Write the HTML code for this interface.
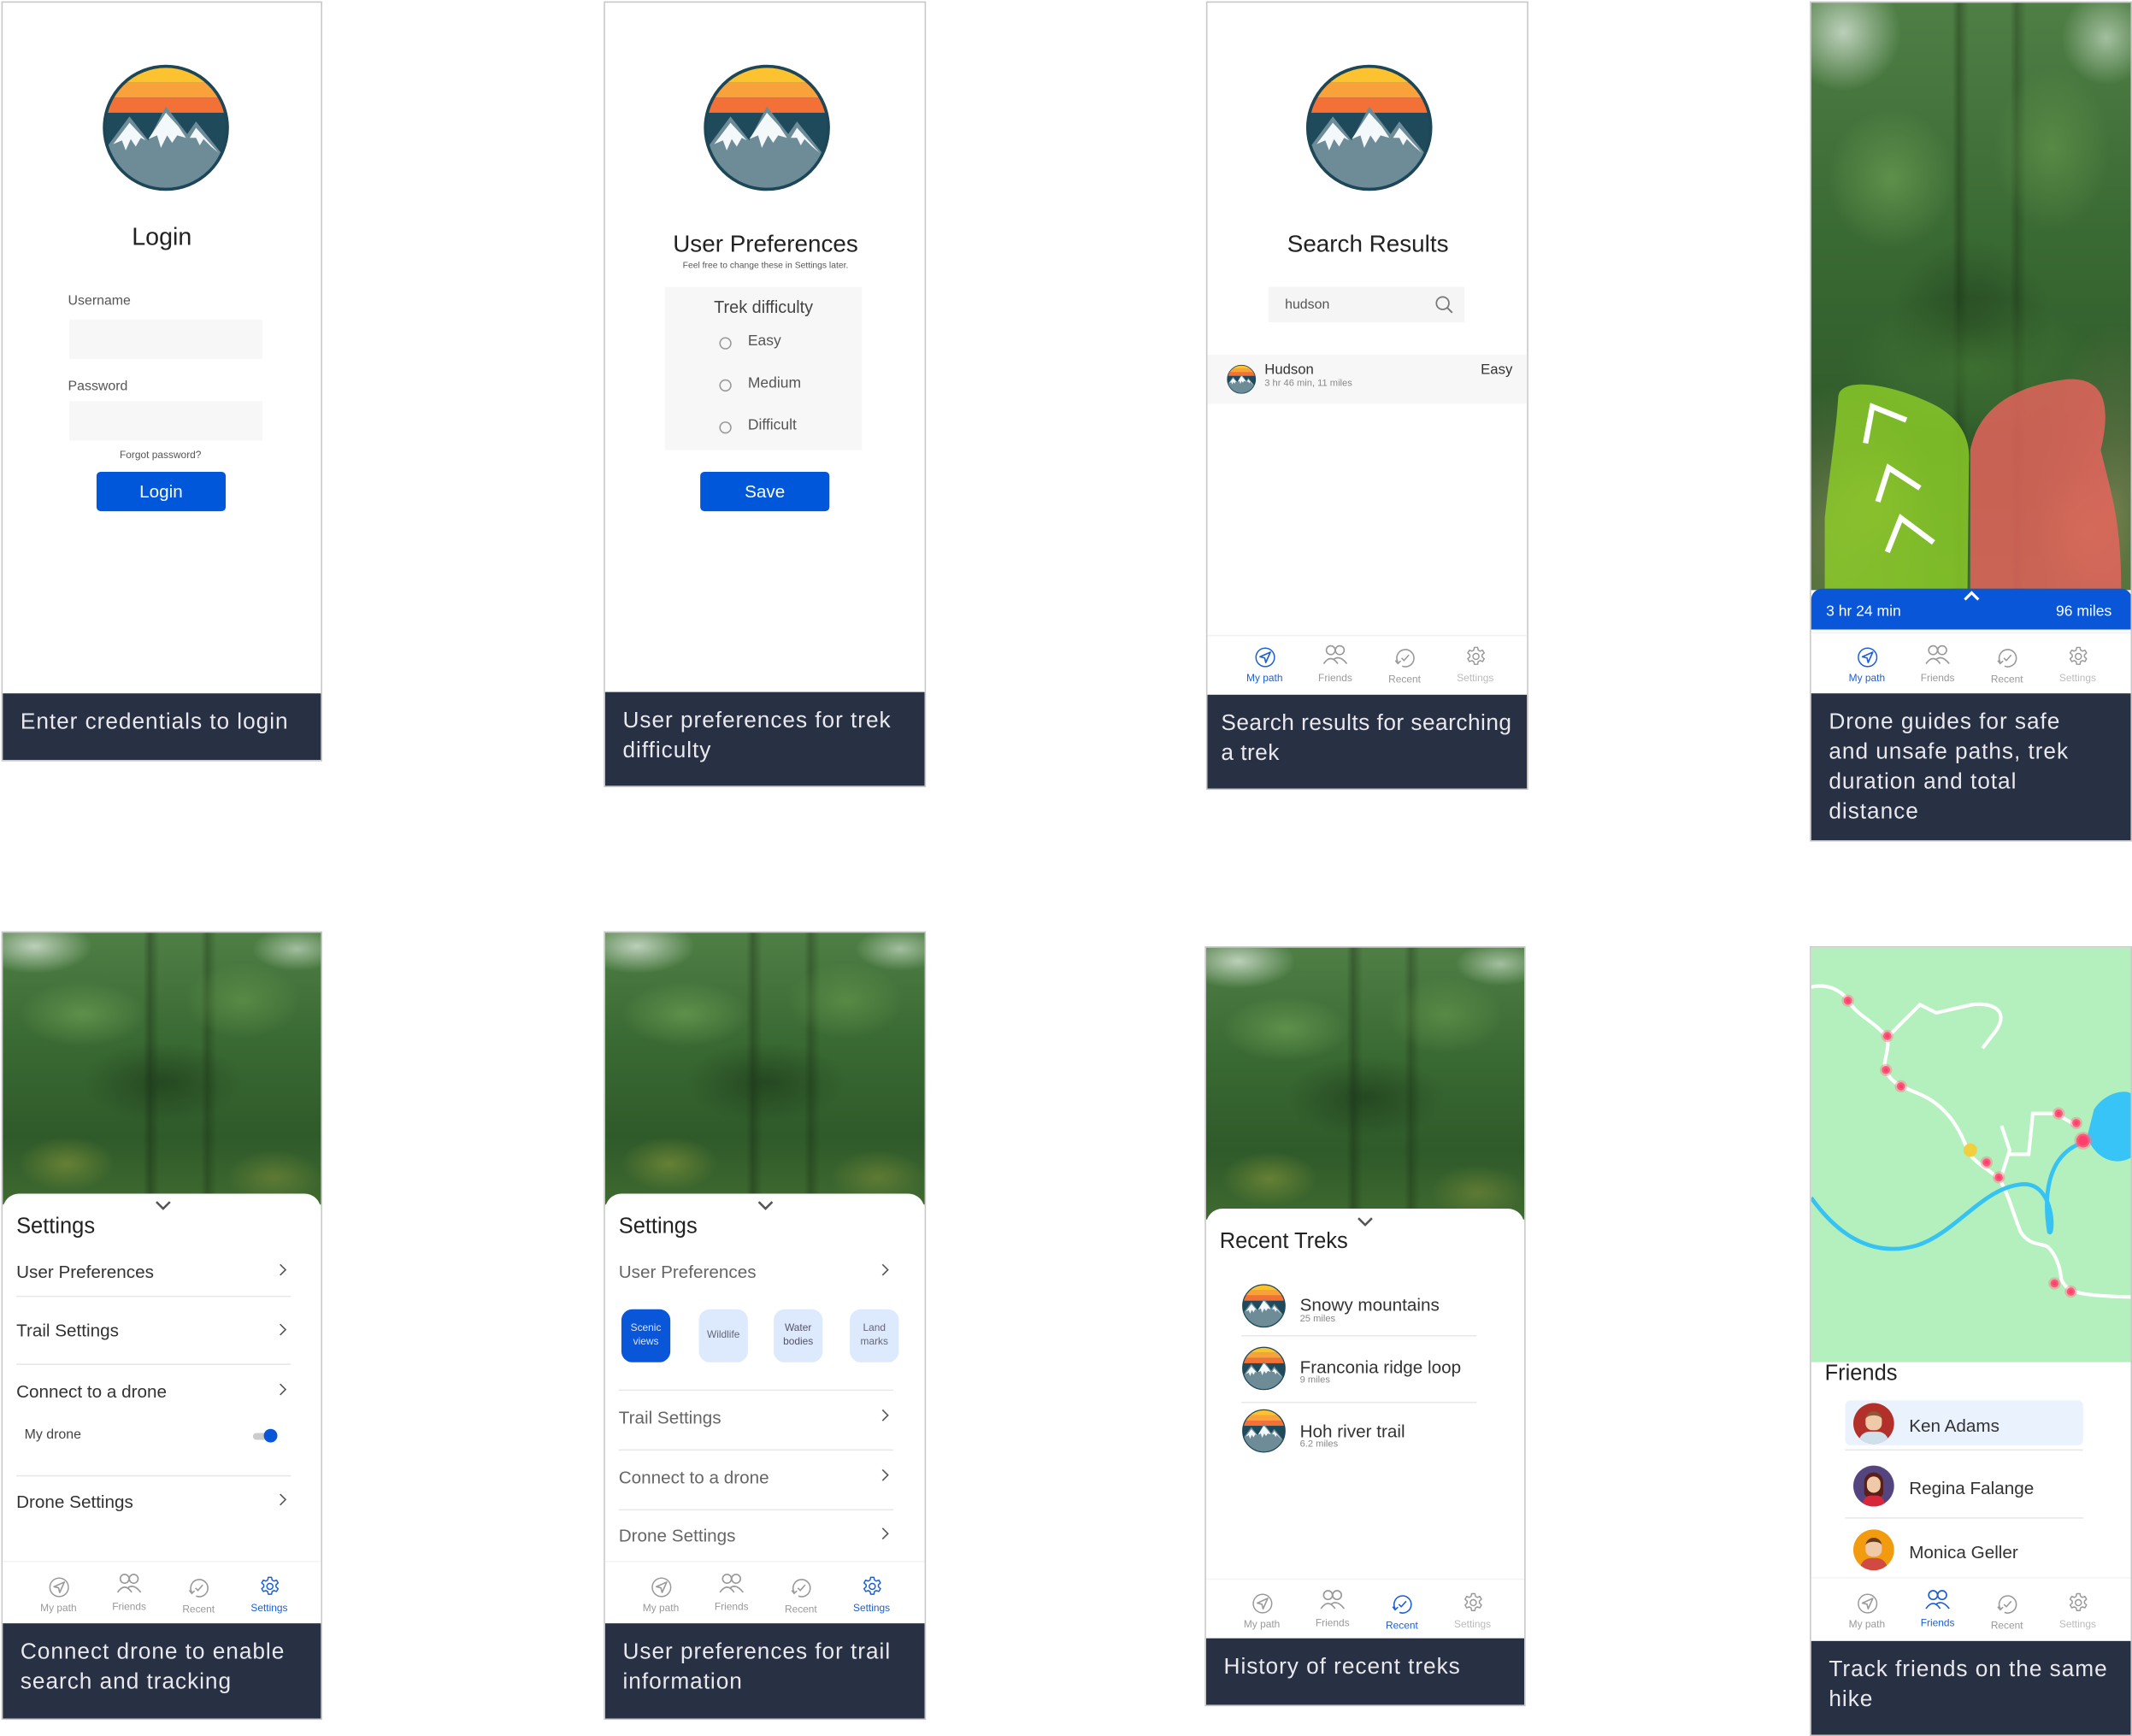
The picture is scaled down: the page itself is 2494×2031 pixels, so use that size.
<!DOCTYPE html>
<html><head><meta charset="utf-8"><style>
*{margin:0;padding:0;box-sizing:border-box}
html,body{width:2494px;height:2031px;overflow:hidden;background:#fff}
#w{position:absolute;left:0;top:0;width:1568px;height:1277px;transform:scale(1.5906);transform-origin:0 0;font-family:"Liberation Sans",sans-serif;color:#333}
.a{position:absolute}
.p{position:absolute;border:1px solid #c8c8c8;background:#fff;overflow:hidden}
.cap{position:absolute;left:0;right:0;bottom:0;background:#283044;color:#e9e9ee;font-size:16.5px;letter-spacing:.6px;line-height:22px;padding:10px 4px 10px 13px;white-space:nowrap}
.t{position:absolute;white-space:nowrap}
.forest{position:absolute;background:
radial-gradient(ellipse 18% 10% at 10% 5%,rgba(225,235,225,.75),transparent),
radial-gradient(ellipse 14% 8% at 92% 6%,rgba(220,235,220,.6),transparent),
radial-gradient(ellipse 20% 12% at 25% 30%,rgba(120,170,90,.55),transparent),
radial-gradient(ellipse 18% 14% at 75% 25%,rgba(110,160,80,.5),transparent),
radial-gradient(ellipse 25% 15% at 50% 55%,rgba(20,45,20,.5),transparent),
radial-gradient(ellipse 15% 10% at 20% 85%,rgba(150,160,60,.5),transparent),
radial-gradient(ellipse 15% 10% at 85% 90%,rgba(140,150,60,.45),transparent),
linear-gradient(90deg,transparent 44%,rgba(20,35,15,.35) 46%,transparent 49%,transparent 62%,rgba(20,35,15,.3) 64%,transparent 67%),
linear-gradient(#4f7f45,#3a6a33 40%,#2f5a2a 75%,#3f6a30)}
.nav{position:absolute;left:0;right:0;height:44px;background:#fff;border-top:1px solid #f0f2f5}
.ni{position:absolute;width:50px;margin-left:-25px;text-align:center;font-size:7.5px;color:#999}
.ni svg{display:block;margin:0 auto 2px}
.on{color:#1a5fd6}
.sheet{position:absolute;left:0;right:0;background:#fff;border-radius:12px 12px 0 0}
.row{position:absolute;font-size:13px;color:#333}
.div{position:absolute;height:1px;background:#e8e8e8}
</style></head><body><div id="w">
<svg width="0" height="0" style="position:absolute">
<defs>
<clipPath id="lc"><circle cx="0" cy="0" r="49"/></clipPath>
<symbol id="logo" viewBox="-52 -52 104 104">
<g clip-path="url(#lc)">
<rect x="-52" y="-52" width="104" height="104" fill="#1e4a5b"/>
<rect x="-52" y="-52" width="104" height="16" fill="#fcc22f"/>
<rect x="-52" y="-36" width="104" height="12" fill="#f9a23b"/>
<rect x="-52" y="-24" width="104" height="12" fill="#f37036"/>
<path d="M-52,22 L-29,-9 L-14,10 L0,-17 L17,5 L24,-5 L52,30 L52,52 L-52,52Z" fill="#6d8c98"/>
<path d="M-29,-4 L-42,13 L-35,10 L-32,18 L-28,9 L-24,15 L-20,8 L-16,10Z" fill="#f3f8fb"/>
<path d="M0,-12 L-14,9 L-7,6 L-4,16 L1,6 L5,12 L9,6 L16,8 L10,-1Z" fill="#f3f8fb"/>
<path d="M24,0 L19,8 L24,8 L27,14 L30,9 L36,15 L42,20Z" fill="#f3f8fb"/>
</g>
<circle cx="0" cy="0" r="49" fill="none" stroke="#1d4656" stroke-width="2.5"/>
</symbol>
<symbol id="i-path" viewBox="0 0 20 20"><circle cx="10" cy="10" r="8" fill="none" stroke="currentColor" stroke-width="1.1"/><path d="M14.5,5.5 L5.5,9.5 L9.5,10.5 L10.5,14.5Z" fill="none" stroke="currentColor" stroke-width="1.2" stroke-linejoin="round"/></symbol>
<symbol id="i-fr" viewBox="0 0 20 20"><circle cx="6.5" cy="5.5" r="3.4" fill="none" stroke="currentColor" stroke-width="1.1"/><circle cx="13.5" cy="5.5" r="3.4" fill="none" stroke="currentColor" stroke-width="1.1"/><path d="M1,16 Q6.5,8 12,16 M9,12.5 Q13.5,9 19,16" fill="none" stroke="currentColor" stroke-width="1.1"/></symbol>
<symbol id="i-rec" viewBox="0 0 20 20"><path d="M4.5,13.5 A7,7 0 1 1 8,16.6" fill="none" stroke="currentColor" stroke-width="1.1"/><path d="M2.5,12 L4.5,14.5 L6.8,12.3" fill="none" stroke="currentColor" stroke-width="1.1"/><path d="M7.5,10 L9.5,12 L13.5,7.5" fill="none" stroke="currentColor" stroke-width="1.1"/></symbol>
<symbol id="i-set" viewBox="0 0 20 20"><path d="M8.6,2 h2.8 l.5,2.3 l1.6,.9 l2.2,-.8 l1.4,2.4 l-1.8,1.6 v1.8 l1.8,1.6 l-1.4,2.4 l-2.2,-.8 l-1.6,.9 l-.5,2.3 h-2.8 l-.5,-2.3 l-1.6,-.9 l-2.2,.8 l-1.4,-2.4 l1.8,-1.6 v-1.8 l-1.8,-1.6 l1.4,-2.4 l2.2,.8 l1.6,-.9Z" fill="none" stroke="currentColor" stroke-width="1.1" stroke-linejoin="round"/><circle cx="10" cy="9.8" r="2.6" fill="none" stroke="currentColor" stroke-width="1.1"/></symbol>
<symbol id="chev" viewBox="0 0 10 10"><path d="M3,1 L7,5 L3,9" fill="none" stroke="#555" stroke-width="1"/></symbol>
</defs></svg>

<!-- P1 Login -->
<div class="p" style="left:1px;top:1px;width:236px;height:559px">
<svg class="a" style="left:72px;top:44px" width="96" height="96"><use href="#logo"/></svg>
<div class="t" style="left:0;width:234px;text-align:center;top:162px;font-size:18px;color:#222">Login</div>
<div class="t" style="left:48px;top:214px;font-size:10px;color:#555">Username</div>
<div class="a" style="left:49px;top:233px;width:142px;height:29px;background:#f7f7f7"></div>
<div class="t" style="left:48px;top:277px;font-size:10px;color:#555">Password</div>
<div class="a" style="left:49px;top:293px;width:142px;height:29px;background:#f7f7f7"></div>
<div class="t" style="left:0;width:232px;text-align:center;top:328px;font-size:7.5px;color:#555">Forgot password?</div>
<div class="a" style="left:69px;top:345px;width:95px;height:29px;background:#0057d9;border-radius:3px;color:#fff;font-size:13px;text-align:center;line-height:29px">Login</div>
<div class="cap" style="height:49px">Enter credentials to login</div>
</div>

<!-- P2 Preferences -->
<div class="p" style="left:444px;top:1px;width:237px;height:578px">
<svg class="a" style="left:71px;top:44px" width="96" height="96"><use href="#logo"/></svg>
<div class="t" style="left:0;width:236px;text-align:center;top:167px;font-size:17.5px;color:#222">User Preferences</div>
<div class="t" style="left:0;width:236px;text-align:center;top:190px;font-size:6.5px;color:#555">Feel free to change these in Settings later.</div>
<div class="a" style="left:44px;top:209px;width:145px;height:120px;background:#f7f7f7"></div>
<div class="t" style="left:44px;width:145px;text-align:center;top:217px;font-size:12.5px;color:#444">Trek difficulty</div>
<div class="a" style="left:84px;top:246px;width:9px;height:9px;border:1px solid #999;border-radius:50%"></div>
<div class="t" style="left:105px;top:243px;font-size:11px;color:#555">Easy</div>
<div class="a" style="left:84px;top:277px;width:9px;height:9px;border:1px solid #999;border-radius:50%"></div>
<div class="t" style="left:105px;top:274px;font-size:11px;color:#555">Medium</div>
<div class="a" style="left:84px;top:308px;width:9px;height:9px;border:1px solid #999;border-radius:50%"></div>
<div class="t" style="left:105px;top:305px;font-size:11px;color:#555">Difficult</div>
<div class="a" style="left:70px;top:345px;width:95px;height:29px;background:#0057d9;border-radius:3px;color:#fff;font-size:13px;text-align:center;line-height:29px">Save</div>
<div class="cap" style="height:69px">User preferences for trek<br>difficulty</div>
</div>

<!-- P3 Search -->
<div class="p" style="left:887px;top:1px;width:237px;height:580px">
<svg class="a" style="left:71px;top:44px" width="96" height="96"><use href="#logo"/></svg>
<div class="t" style="left:0;width:236px;text-align:center;top:167px;font-size:17.5px;color:#222">Search Results</div>
<div class="a" style="left:45px;top:209px;width:144px;height:26px;background:#f5f5f5"></div>
<div class="t" style="left:57px;top:217px;font-size:10px;color:#555">hudson</div>
<svg class="a" style="left:167px;top:215px" width="14" height="14" viewBox="0 0 14 14"><circle cx="6" cy="6" r="4.6" fill="none" stroke="#777" stroke-width="1.1"/><path d="M9.4,9.4 L13,13" stroke="#777" stroke-width="1.2"/></svg>
<div class="a" style="left:0;top:259px;width:236px;height:36px;background:#f7f7f7"></div>
<svg class="a" style="left:14px;top:266px" width="22" height="22"><use href="#logo"/></svg>
<div class="t" style="left:42px;top:264px;font-size:10.5px;color:#333">Hudson</div>
<div class="t" style="left:42px;top:277px;font-size:7px;color:#888">3 hr 46 min, 11 miles</div>
<div class="t" style="left:201px;top:264px;font-size:10.5px;color:#333">Easy</div>
<div class="nav" style="top:465px">
<div class="ni on" style="left:42px;top:7px"><svg width="17" height="17"><use href="#i-path"/></svg>My path</div>
<div class="ni" style="left:94px;top:5px"><svg width="20" height="19"><use href="#i-fr"/></svg>Friends</div>
<div class="ni" style="left:145px;top:7px"><svg width="18" height="18"><use href="#i-rec"/></svg>Recent</div>
<div class="ni" style="left:197px;top:6px;color:#bbb"><svg width="17" height="18" style="color:#999"><use href="#i-set"/></svg>Settings</div>
</div>
<div class="cap" style="height:69px;letter-spacing:.3px;padding-left:10px">Search results for searching<br>a trek</div>
</div>

<!-- P4 Drone -->
<div class="p" style="left:1331px;top:1px;width:237px;height:618px">
<div class="forest" style="left:0;top:0;width:236px;height:432px"></div>
<div class="a" style="left:0;top:0;width:236px;height:432px;background:radial-gradient(ellipse 30% 25% at 10% 90%,rgba(170,150,110,.45),transparent),radial-gradient(ellipse 25% 30% at 95% 85%,rgba(170,150,110,.45),transparent),radial-gradient(ellipse 40% 12% at 50% 62%,rgba(80,140,60,.5),transparent)"></div>
<svg class="a" style="left:0;top:0" width="236" height="460" viewBox="1332 1 236 460">
<path d="M1352,290 C1355,275 1395,282 1425,298 C1445,310 1449,325 1448,340 L1447,432 L1342,432 L1342,380 C1345,350 1350,320 1352,290Z" fill="rgba(140,205,40,.82)"/>
<path d="M1449,330 C1455,300 1480,283 1520,278 C1550,276 1552,300 1545,330 C1552,360 1560,380 1560,432 L1449,432Z" fill="rgba(238,100,95,.8)"/>
<path d="M1372,325 L1377,298 L1402,308 M1381,368 L1389,343 L1412,358 M1388,405 L1398,380 L1422,398" fill="none" stroke="#fff" stroke-width="4"/>
</svg>
<div class="a" style="left:0;top:431px;width:236px;height:30px;background:#0a56d8;border-radius:8px 8px 0 0"></div>
<svg class="a" style="left:111px;top:432px" width="14" height="9" viewBox="0 0 14 9"><path d="M2,7 L7,2 L12,7" fill="none" stroke="#fff" stroke-width="2"/></svg>
<div class="t" style="left:11px;top:442px;font-size:11px;color:#fff">3 hr 24 min</div>
<div class="t" style="right:14px;top:442px;font-size:11px;color:#fff">96 miles</div>
<div class="nav" style="top:463px">
<div class="ni on" style="left:41px;top:9px"><svg width="17" height="17"><use href="#i-path"/></svg>My path</div>
<div class="ni" style="left:93px;top:7px"><svg width="20" height="19"><use href="#i-fr"/></svg>Friends</div>
<div class="ni" style="left:144px;top:9px"><svg width="18" height="18"><use href="#i-rec"/></svg>Recent</div>
<div class="ni" style="left:196px;top:8px;color:#bbb"><svg width="17" height="18" style="color:#999"><use href="#i-set"/></svg>Settings</div>
</div>
<div class="cap" style="height:108px">Drone guides for safe<br>and unsafe paths, trek<br>duration and total<br>distance</div>
</div>

<!-- P5 Settings drone -->
<div class="p" style="left:1px;top:685px;width:236px;height:580px">
<div class="forest" style="left:0;top:0;width:235px;height:200px"></div>
<div class="sheet" style="top:192px;height:390px"></div>
<svg class="a" style="left:111px;top:196px" width="14" height="9" viewBox="0 0 14 9"><path d="M2,2 L7,7 L12,2" fill="none" stroke="#555" stroke-width="1.6"/></svg>
<div class="t" style="left:10px;top:208px;font-size:16px;color:#222">Settings</div>
<div class="row" style="left:10px;top:242px">User Preferences</div>
<svg class="a" style="left:201px;top:243px" width="10" height="10"><use href="#chev"/></svg>
<div class="div" style="left:10px;width:202px;top:267px"></div>
<div class="row" style="left:10px;top:285px">Trail Settings</div>
<svg class="a" style="left:201px;top:287px" width="10" height="10"><use href="#chev"/></svg>
<div class="div" style="left:10px;width:202px;top:317px"></div>
<div class="row" style="left:10px;top:330px">Connect to a drone</div>
<svg class="a" style="left:201px;top:331px" width="10" height="10"><use href="#chev"/></svg>
<div class="t" style="left:16px;top:364px;font-size:10px;color:#444">My drone</div>
<div class="a" style="left:184px;top:368px;width:15px;height:5px;background:#ccc;border-radius:3px"></div>
<div class="a" style="left:192px;top:365px;width:10px;height:10px;background:#0a56d8;border-radius:50%"></div>
<div class="div" style="left:10px;width:202px;top:399px"></div>
<div class="row" style="left:10px;top:411px">Drone Settings</div>
<svg class="a" style="left:201px;top:412px" width="10" height="10"><use href="#chev"/></svg>
<div class="nav" style="top:462px;border-top:1px solid #f3f4f7">
<div class="ni" style="left:41px;top:10px"><svg width="17" height="17"><use href="#i-path"/></svg>My path</div>
<div class="ni" style="left:93px;top:7px"><svg width="20" height="19"><use href="#i-fr"/></svg>Friends</div>
<div class="ni" style="left:144px;top:10px"><svg width="18" height="18"><use href="#i-rec"/></svg>Recent</div>
<div class="ni on" style="left:196px;top:9px"><svg width="17" height="18"><use href="#i-set"/></svg>Settings</div>
</div>
<div class="cap" style="height:70px">Connect drone to enable<br>search and tracking</div>
</div>

<!-- P6 Settings trail -->
<div class="p" style="left:444px;top:685px;width:237px;height:580px">
<div class="forest" style="left:0;top:0;width:236px;height:200px"></div>
<div class="sheet" style="top:192px;height:390px"></div>
<svg class="a" style="left:111px;top:196px" width="14" height="9" viewBox="0 0 14 9"><path d="M2,2 L7,7 L12,2" fill="none" stroke="#555" stroke-width="1.6"/></svg>
<div class="t" style="left:10px;top:208px;font-size:16px;color:#222">Settings</div>
<div class="row" style="left:10px;top:242px;color:#666">User Preferences</div>
<svg class="a" style="left:201px;top:243px" width="10" height="10"><use href="#chev"/></svg>
<div class="a" style="left:12px;top:277px;width:36px;height:39px;background:#0a56d8;border-radius:8px;color:#dbe6fb;font-size:7.5px;text-align:center;padding-top:9px;line-height:10px">Scenic<br>views</div>
<div class="a" style="left:69px;top:277px;width:36px;height:39px;background:#dde9fd;border-radius:8px;color:#667;font-size:7.5px;text-align:center;padding-top:14px;line-height:10px">Wildlife</div>
<div class="a" style="left:124px;top:277px;width:36px;height:39px;background:#dde9fd;border-radius:8px;color:#556;font-size:7.5px;text-align:center;padding-top:9px;line-height:10px">Water<br>bodies</div>
<div class="a" style="left:180px;top:277px;width:36px;height:39px;background:#dde9fd;border-radius:8px;color:#667;font-size:7.5px;text-align:center;padding-top:9px;line-height:10px">Land<br>marks</div>
<div class="div" style="left:10px;width:202px;top:336px"></div>
<div class="row" style="left:10px;top:349px;color:#666">Trail Settings</div>
<svg class="a" style="left:201px;top:350px" width="10" height="10"><use href="#chev"/></svg>
<div class="div" style="left:10px;width:202px;top:380px"></div>
<div class="row" style="left:10px;top:393px;color:#666">Connect to a drone</div>
<svg class="a" style="left:201px;top:394px" width="10" height="10"><use href="#chev"/></svg>
<div class="div" style="left:10px;width:202px;top:424px"></div>
<div class="row" style="left:10px;top:436px;color:#666">Drone Settings</div>
<svg class="a" style="left:201px;top:437px" width="10" height="10"><use href="#chev"/></svg>
<div class="nav" style="top:462px;border-top:1px solid #f3f4f7">
<div class="ni" style="left:41px;top:10px"><svg width="17" height="17"><use href="#i-path"/></svg>My path</div>
<div class="ni" style="left:93px;top:7px"><svg width="20" height="19"><use href="#i-fr"/></svg>Friends</div>
<div class="ni" style="left:144px;top:10px"><svg width="18" height="18"><use href="#i-rec"/></svg>Recent</div>
<div class="ni on" style="left:196px;top:9px"><svg width="17" height="18"><use href="#i-set"/></svg>Settings</div>
</div>
<div class="cap" style="height:70px">User preferences for trail<br>information</div>
</div>

<!-- P7 Recent -->
<div class="p" style="left:886px;top:696px;width:236px;height:559px">
<div class="forest" style="left:0;top:0;width:235px;height:200px"></div>
<div class="sheet" style="top:192px;height:370px"></div>
<svg class="a" style="left:110px;top:197px" width="14" height="9" viewBox="0 0 14 9"><path d="M2,2 L7,7 L12,2" fill="none" stroke="#555" stroke-width="1.6"/></svg>
<div class="t" style="left:10px;top:208px;font-size:16px;color:#222">Recent Treks</div>
<svg class="a" style="left:26px;top:247px" width="33" height="33"><use href="#logo"/></svg>
<div class="t" style="left:69px;top:255px;font-size:13px;color:#333">Snowy mountains</div>
<div class="t" style="left:69px;top:270px;font-size:7px;color:#888">25 miles</div>
<div class="div" style="left:26px;width:173px;top:285px"></div>
<svg class="a" style="left:26px;top:293px" width="33" height="33"><use href="#logo"/></svg>
<div class="t" style="left:69px;top:301px;font-size:13px;color:#333">Franconia ridge loop</div>
<div class="t" style="left:69px;top:315px;font-size:7px;color:#888">9 miles</div>
<div class="div" style="left:26px;width:173px;top:334px"></div>
<svg class="a" style="left:26px;top:339px" width="33" height="33"><use href="#logo"/></svg>
<div class="t" style="left:69px;top:348px;font-size:13px;color:#333">Hoh river trail</div>
<div class="t" style="left:69px;top:362px;font-size:7px;color:#888">6.2 miles</div>
<div class="nav" style="top:464px;border-top:1px solid #f3f4f7">
<div class="ni" style="left:41px;top:9px"><svg width="17" height="17"><use href="#i-path"/></svg>My path</div>
<div class="ni" style="left:93px;top:6px"><svg width="20" height="19"><use href="#i-fr"/></svg>Friends</div>
<div class="ni on" style="left:144px;top:9px"><svg width="18" height="18"><use href="#i-rec"/></svg>Recent</div>
<div class="ni" style="left:196px;top:8px;color:#bbb"><svg width="17" height="18" style="color:#999"><use href="#i-set"/></svg>Settings</div>
</div>
<div class="cap" style="height:49px">History of recent treks</div>
</div>

<!-- P8 Friends -->
<div class="p" style="left:1331px;top:696px;width:237px;height:581px">
<svg class="a" style="left:0;top:0" width="236" height="305" viewBox="1332 696 236 305">
<rect x="1332" y="696" width="236" height="305" fill="#b3f0bd"/>
<path d="M1332,725 C1345,722 1355,728 1360,736 C1366,746 1378,750 1388,762 C1390,772 1384,780 1387,786 C1390,795 1398,798 1410,803 C1428,810 1440,825 1447,845 C1452,855 1462,858 1471,867 C1478,880 1480,890 1486,905 C1492,915 1500,913 1506,916 C1512,922 1515,930 1516,940 C1520,950 1530,952 1567,953" fill="none" stroke="#fff" stroke-width="2.6"/>
<path d="M1388,762 L1412,738 L1424,744 L1450,738 C1465,736 1478,742 1468,757 L1458,770" fill="none" stroke="#fff" stroke-width="2.6"/>
<path d="M1471,867 L1478,845 L1472,827 M1476,848 L1492,848 L1495,818 L1512,818 L1527,827" fill="none" stroke="#fff" stroke-width="2.6"/>
<path d="M1332,880 C1350,905 1375,925 1410,915 C1440,905 1460,870 1490,870 C1512,872 1510,910 1507,905 C1503,880 1505,850 1530,840 L1548,835" fill="none" stroke="#36c3f4" stroke-width="3"/>
<path d="M1540,815 C1550,800 1568,800 1568,805 L1568,850 C1555,858 1540,850 1535,835 Z" fill="#38c4f6"/>
<g fill="#ff3f6b" stroke="rgba(255,120,140,.45)" stroke-width="3">
<circle cx="1359" cy="735" r="3"/><circle cx="1388" cy="761" r="3"/><circle cx="1387" cy="786" r="3"/><circle cx="1398" cy="798" r="3"/><circle cx="1461" cy="854" r="3"/><circle cx="1470" cy="865" r="3"/><circle cx="1514" cy="818" r="3"/><circle cx="1527" cy="825" r="3"/><circle cx="1532" cy="838" r="5"/><circle cx="1511" cy="943" r="3"/><circle cx="1523" cy="949" r="3"/>
</g>
<circle cx="1449" cy="845" r="5" fill="#f2cf3e"/>
</svg>
<div class="t" style="left:10px;top:305px;font-size:16px;color:#222">Friends</div>
<div class="a" style="left:25px;top:333px;width:175px;height:33px;background:#eaf2fe;border-radius:4px"></div>
<div class="a" style="left:31px;top:335px;width:30px;height:30px;border-radius:50%;background:#b3302a;overflow:hidden"><div class="a" style="left:9px;top:6px;width:12px;height:14px;background:#f0c9a8;border-radius:6px 6px 5px 5px;border-top:3px solid #8a5a3a"></div><div class="a" style="left:4px;top:21px;width:22px;height:12px;background:#cfe0ea;border-radius:8px 8px 0 0"></div></div>
<div class="t" style="left:72px;top:344px;font-size:13px;color:#333">Ken Adams</div>
<div class="div" style="left:25px;width:175px;top:369px"></div>
<div class="a" style="left:31px;top:381px;width:30px;height:30px;border-radius:50%;background:#54457e;overflow:hidden"><div class="a" style="left:8px;top:5px;width:14px;height:18px;background:#5a1f18;border-radius:7px 7px 3px 3px"></div><div class="a" style="left:10px;top:8px;width:10px;height:12px;background:#f0c9a8;border-radius:5px"></div><div class="a" style="left:7px;top:22px;width:16px;height:10px;background:#d6283a;border-radius:6px 6px 0 0"></div></div>
<div class="t" style="left:72px;top:390px;font-size:13px;color:#333">Regina Falange</div>
<div class="div" style="left:25px;width:175px;top:419px"></div>
<div class="a" style="left:31px;top:428px;width:30px;height:30px;border-radius:50%;background:#f29b0f;overflow:hidden"><div class="a" style="left:9px;top:6px;width:12px;height:14px;background:#f0c9a8;border-radius:6px 6px 5px 5px;border-top:3px solid #6a3a20"></div><div class="a" style="left:5px;top:21px;width:20px;height:12px;background:#d04a42;border-radius:8px 8px 0 0"></div></div>
<div class="t" style="left:72px;top:437px;font-size:13px;color:#333">Monica Geller</div>
<div class="nav" style="top:463px;border-top:1px solid #f3f4f7">
<div class="ni" style="left:41px;top:10px"><svg width="17" height="17"><use href="#i-path"/></svg>My path</div>
<div class="ni on" style="left:93px;top:7px"><svg width="20" height="19"><use href="#i-fr"/></svg>Friends</div>
<div class="ni" style="left:144px;top:10px"><svg width="18" height="18"><use href="#i-rec"/></svg>Recent</div>
<div class="ni" style="left:196px;top:9px;color:#bbb"><svg width="17" height="18" style="color:#999"><use href="#i-set"/></svg>Settings</div>
</div>
<div class="cap" style="height:69px">Track friends on the same<br>hike</div>
</div>

</div></body></html>
